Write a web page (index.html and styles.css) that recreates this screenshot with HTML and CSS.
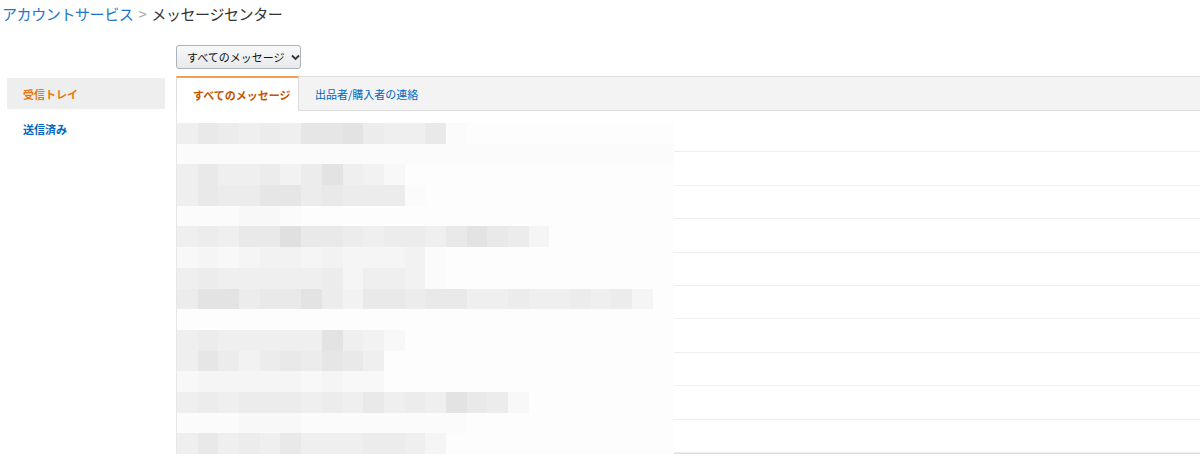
FILE: index.html
```html
<!DOCTYPE html>
<html>
<head>
    <meta charset="UTF-8">
    <title>メッセージセンター</title>
    <link rel="stylesheet" href="styles.css">
</head>

<body>
    <div class="crumbs">
        <a href="#">アカウントサービス</a>
        <span class="sep">&gt;</span>
        <span class="here">メッセージセンター</span>
    </div>

    <div class="page">
        <ul class="side">
            <li class="active"><a href="#">受信トレイ</a></li>
            <li><a href="#">送信済み</a></li>
        </ul>

        <div class="main">
            <button class="picker">すべてのメッセージ
                <svg width="9" height="7" viewBox="0 0 9 7"><path d="M1 1.5 L4.5 5 L8 1.5" fill="none" stroke="#333" stroke-width="1.8"/></svg>
            </button>

            <div class="tabs">
                <a class="tab on" href="#">すべてのメッセージ</a>
                <a class="tab" href="#">出品者/購入者の連絡</a>
            </div>

            <div class="list">
                <div class="row"></div>
                <div class="row"></div>
                <div class="row"></div>
                <div class="row"></div>
                <div class="row"></div>
                <div class="row"></div>
                <div class="row"></div>
                <div class="row"></div>
                <div class="row"></div>
                <div class="row"></div>
                <!-- 件名はモザイクで隠す -->
                <div class="mosaic" id="mosaic"></div>
            </div>
        </div>
    </div>

    <script>
        // モザイクの濃さ (0 = 濃い, 9 = 薄い)
        var rows = [
            "53454522145539",
            "999999999999999999999999",
            "53554641568",
            "534422434449",
            "999889",
            "545330334544531347",
            "8787667677769",
            "5455555475569",
            "41143314633433554554547",
            "",
            "54555551568",
            "5246434235",
            "8777778788",
            "54544454535451348",
            "99988899999999",
            "5354535554457"
        ];
        var shades = {
            '0': '#e0e0e0', '1': '#e3e3e3', '2': '#e6e6e6', '3': '#e9e9e9', '4': '#ececec',
            '5': '#efefef', '6': '#f2f2f2', '7': '#f5f5f5', '8': '#f8f8f8', '9': '#fbfbfb'
        };
        var box = document.getElementById('mosaic');
        rows.forEach(function (r) {
            for (var i = 0; i < 24; i++) {
                var cell = document.createElement('span');
                var k = r.charAt(i);
                if (shades[k]) cell.style.background = shades[k];
                box.appendChild(cell);
            }
        });
    </script>
</body>

</html>
```

FILE: styles.css
```css
body {
    margin: 0;
    font-family: "Noto Sans CJK JP", sans-serif;
    background-color: #fff;
    color: #333;
}

a {
    text-decoration: none;
}

/* パンくず */
.crumbs {
    padding: 4px 0 0 2px;
    height: 41px;
    font-size: 15px;
    line-height: 20px;
    letter-spacing: -0.4px;
}

    .crumbs a {
        color: #2277cc;
    }

    .crumbs .sep {
        color: #aaa;
        margin: 0 2px;
    }

    .crumbs .here {
        color: #333;
    }

.page {
    display: grid;
    grid-template-columns: 158px 1fr;
    column-gap: 11px;
    padding-left: 7px;
}

/* 左メニュー */
.side {
    list-style: none;
    margin: 33px 0 0 0;
    padding: 0;
}

    .side li {
        height: 31px;
        margin-bottom: 4px;
        display: flex;
        align-items: center;
        padding-left: 16px;
    }

    .side a {
        font-size: 11px;
        font-weight: bold;
        color: #0066c0;
    }

    .side li.active {
        background-color: #eeeeee;
    }

        .side li.active a {
            color: #e47911;
        }

/* 絞り込み */
.picker {
    display: flex;
    align-items: center;
    gap: 6px;
    height: 24px;
    width: 125px;
    padding: 0 0 0 10px;
    font-family: inherit;
    font-size: 11px;
    color: #111;
    background: linear-gradient(#f7f8fa, #e7e9ec);
    border: 1px solid #adb1b8;
    border-radius: 3px;
    cursor: pointer;
}

/* タブ */
.tabs {
    display: flex;
    margin-top: 7px;
    height: 33px;
    background-color: #f3f3f3;
    border-top: 1px solid #dddddd;
    border-bottom: 1px solid #dddddd;
}

.tab {
    display: flex;
    align-items: center;
    padding: 0 16px;
    font-size: 11px;
    white-space: nowrap;
    color: #0066c0;
}

    .tab.on {
        box-sizing: border-box;
        width: 123px;
        margin: -1px 0 -1px 0;
        padding-top: 1px;
        font-weight: bold;
        color: #c45500;
        background-color: #fff;
        border-top: 2px solid #f0a050;
        border-left: 1px solid #dddddd;
        border-right: 1px solid #dddddd;
    }

/* 一覧 */
.list {
    position: relative;
    padding-top: 8px;
    border-left: 1px solid #e7e7e7;
    border-bottom: 1px solid #dddddd;
}

.row {
    height: 33.4px;
    box-sizing: border-box;
    border-bottom: 1px solid #eeeeee;
}

    .row:last-of-type {
        border-bottom: none;
    }

.mosaic {
    position: absolute;
    left: 0;
    top: 12px;
    display: grid;
    grid-template-columns: repeat(24, 20.7px);
    grid-auto-rows: 20.7px;
    background-color: #fdfdfd;
}
```
